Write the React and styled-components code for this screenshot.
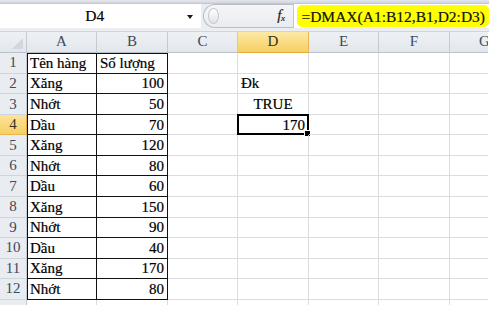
import React from 'react';
import styled, { createGlobalStyle } from 'styled-components';

const SERIF = '"Liberation Serif", "DejaVu Serif", "Times New Roman", serif';

const GlobalStyle = createGlobalStyle`
  html, body { margin: 0; padding: 0; background: #fff; }
  body { font-family: ${SERIF}; color: #000; }
`;

const Window = styled.div`
  width: 489px;
  height: 305px;
  overflow: hidden;
  display: flex;
  flex-direction: column;
  background: #fff;
  font-family: ${SERIF};
`;

const RibbonEdge = styled.div`
  height: 4px;
  box-sizing: border-box;
  background: linear-gradient(#e3e6ea, #d3d7dd);
  border-bottom: 1px solid #c3c8cf;
`;

const FormulaBar = styled.div`
  height: 24px;
  display: flex;
  align-items: stretch;
  background: #e9ecf0;
`;

const NameBox = styled.div`
  width: 206px;
  background: #fff;
  display: grid;
  grid-template-columns: 1fr 14px;
  align-items: center;
  font-family: ${SERIF};
  font-size: 15.5px;
  -webkit-text-stroke: 0.2px #000;
`;

const NameText = styled.span`
  text-align: center;
  padding-left: 2px;
`;

const DropArrow = styled.span`
  width: 0;
  height: 0;
  border-left: 3.5px solid transparent;
  border-right: 3.5px solid transparent;
  border-top: 4px solid #1a1a1a;
  justify-self: start;
  margin-top: 2px;
`;

const FxArea = styled.div`
  width: 92px;
  display: flex;
  align-items: center;
  box-sizing: border-box;
  margin-left: 2px;
  border: 1px solid #b8bec7;
  border-right: none;
  border-radius: 12px 0 0 12px;
  background: linear-gradient(#f4f5f7, #e9ecf0);
`;

const Handle = styled.span`
  width: 9px;
  height: 14px;
  margin-left: 4px;
  border-radius: 50%;
  border: 1px solid #c3c8cf;
  background: linear-gradient(#ffffff, #dfe2e6);
`;

const FxLabel = styled.span`
  margin-left: auto;
  margin-right: 9px;
  font-family: ${SERIF};
  font-style: italic;
  font-size: 15px;
  color: #222;
  letter-spacing: -0.5px;
  -webkit-text-stroke: 0.2px #222;
  sub {
    font-size: 9px;
    vertical-align: -1px;
  }
`;

const FormulaInput = styled.div`
  flex: 1;
  background: #fff;
  border-left: 1px solid #c3c8cf;
  display: flex;
  align-items: center;
  padding-left: 3px;
`;

const Highlight = styled.span`
  background: #ffff00;
  border-radius: 5px;
  padding: 2px 4px 1px 4px;
  font-family: ${SERIF};
  font-size: 15.5px;
  line-height: 19px;
  color: #111;
  -webkit-text-stroke: 0.2px #111;
`;

const BarGap = styled.div`
  height: 4px;
  box-sizing: border-box;
  background: #eceef1;
  border-bottom: 1px solid #d0d5db;
`;

const Sheet = styled.div`
  width: 488px;
  overflow: hidden;
  display: grid;
  grid-template-columns: 27px 70px 71px 70px 71px 70px 71px 70px;
  grid-template-rows: 21px 21px repeat(11, 20.55px) 8px;
  font-family: ${SERIF};
  font-size: 15px;
`;

const Corner = styled.div`
  position: relative;
  box-sizing: border-box;
  background: linear-gradient(#eef1f4, #e3e7ec);
  border-right: 1px solid #c5cbd3;
  border-bottom: 1px solid #b9c1cb;
  &::after {
    content: '';
    position: absolute;
    right: 3px;
    bottom: 3px;
    width: 0;
    height: 0;
    border-left: 11px solid transparent;
    border-bottom: 11px solid #d3d7dd;
  }
`;

const ColHeader = styled.div`
  box-sizing: border-box;
  display: flex;
  align-items: center;
  justify-content: center;
  white-space: nowrap;
  color: ${(p) => (p.$active ? '#3a3220' : '#3d4a5c')};
  background: ${(p) =>
    p.$active ? 'linear-gradient(#fde9a6, #f7cf63)' : 'linear-gradient(#eef1f4, #e3e7ec)'};
  border-right: 1px solid ${(p) => (p.$active ? '#e8b650' : '#c5cbd3')};
  border-bottom: 1px solid ${(p) => (p.$active ? '#e5a93c' : '#b9c1cb')};
`;

const RowHeader = styled.div`
  box-sizing: border-box;
  display: flex;
  align-items: center;
  justify-content: center;
  color: ${(p) => (p.$active ? '#3a3220' : '#3d4a5c')};
  background: ${(p) =>
    p.$active ? 'linear-gradient(#fde39a, #f7cf63)' : '#e9ecf0'};
  border-right: 1px solid ${(p) => (p.$active ? '#e5a93c' : '#c5cbd3')};
  border-bottom: 1px solid ${(p) => (p.$active ? '#e8b650' : '#d0d5db')};
`;

const Cell = styled.div`
  position: relative;
  box-sizing: border-box;
  display: flex;
  align-items: center;
  justify-content: ${(p) =>
    p.$align === 'right' ? 'flex-end' : p.$align === 'center' ? 'center' : 'flex-start'};
  padding: 1px 3px 0 3px;
  white-space: nowrap;
  -webkit-text-stroke: 0.2px #000;
  border-right: 1px solid ${(p) => (p.$table ? '#111' : '#dadcdd')};
  border-bottom: 1px solid ${(p) => (p.$table ? '#111' : '#dadcdd')};
  box-shadow: ${(p) =>
    [p.$edgeLeft && 'inset 1px 0 0 #111', p.$edgeTop && 'inset 0 1px 0 #111']
      .filter(Boolean)
      .join(', ') || 'none'};
`;

const ActiveFrame = styled.span`
  position: absolute;
  left: -1px;
  top: -1px;
  right: -1px;
  bottom: -1px;
  border: 2px solid #000;
  pointer-events: none;
  &::after {
    content: '';
    position: absolute;
    right: -4px;
    bottom: -4px;
    width: 5px;
    height: 5px;
    background: #000;
    border: 1px solid #fff;
  }
`;

const columns = ['A', 'B', 'C', 'D', 'E', 'F', 'G'];

const data = [
  ['Tên hàng', 'Số lượng'],
  ['Xăng', 100],
  ['Nhớt', 50],
  ['Dầu', 70],
  ['Xăng', 120],
  ['Nhớt', 80],
  ['Dầu', 60],
  ['Xăng', 150],
  ['Nhớt', 90],
  ['Dầu', 40],
  ['Xăng', 170],
  ['Nhớt', 80],
];

const extra = {
  2: { D: { text: 'Đk', align: 'left' } },
  3: { D: { text: 'TRUE', align: 'center' } },
  4: { D: { text: '170', align: 'right', active: true } },
};

export default function App() {
  const rows = [];
  for (let r = 1; r <= 13; r++) {
    const rowData = data[r - 1];
    rows.push(
      <RowHeader key={`h${r}`} $active={r === 4}>
        {r <= 12 ? r : ''}
      </RowHeader>
    );
    columns.forEach((c, ci) => {
      const inTable = rowData && ci < 2;
      let text = '';
      let align = 'left';
      let active = false;
      if (inTable) {
        const v = rowData[ci];
        text = v;
        align = typeof v === 'number' ? 'right' : 'left';
      }
      const ex = extra[r] && extra[r][c];
      if (ex) {
        text = ex.text;
        align = ex.align;
        active = !!ex.active;
      }
      rows.push(
        <Cell
          key={`${c}${r}`}
          $table={inTable}
          $edgeLeft={inTable && ci === 0}
          $edgeTop={inTable && r === 1}
          $align={align}
        >
          {text}
          {active && <ActiveFrame />}
        </Cell>
      );
    });
  }

  return (
    <>
      <GlobalStyle />
      <Window>
        <RibbonEdge />
        <FormulaBar>
          <NameBox>
            <NameText>D4</NameText>
            <DropArrow />
          </NameBox>
          <FxArea>
            <Handle />
            <FxLabel>
              f<sub>x</sub>
            </FxLabel>
          </FxArea>
          <FormulaInput>
            <Highlight>=DMAX(A1:B12,B1,D2:D3)</Highlight>
          </FormulaInput>
        </FormulaBar>
        <BarGap />
        <Sheet>
          <Corner />
          {columns.map((c) => (
            <ColHeader key={c} $active={c === 'D'}>
              {c}
            </ColHeader>
          ))}
          {rows}
        </Sheet>
      </Window>
    </>
  );
}
